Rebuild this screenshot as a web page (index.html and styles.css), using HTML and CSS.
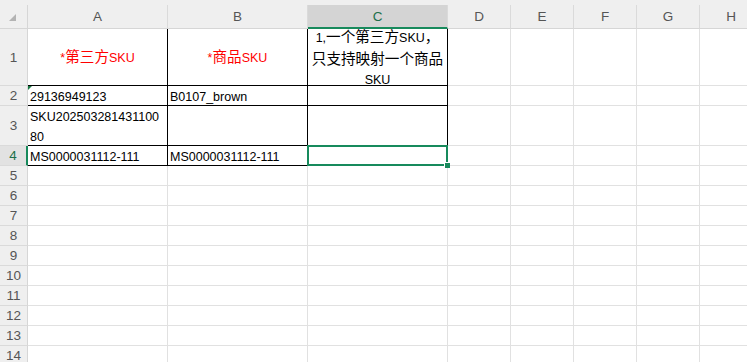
FILE: index.html
```html
<!DOCTYPE html>
<html lang="zh-CN">
<head>
  <meta charset="UTF-8">
  <title>映射表</title>
  <link rel="stylesheet" href="styles.css">
</head>
<body>

  <div class="frame">
    <div class="sheet">

      <!-- column headers -->
      <div class="corner"><span class="all"></span></div>
      <div class="ch">A</div>
      <div class="ch">B</div>
      <div class="ch on">C</div>
      <div class="ch">D</div>
      <div class="ch">E</div>
      <div class="ch">F</div>
      <div class="ch">G</div>
      <div class="ch">H</div>

      <!-- row 1 -->
      <div class="rh">1</div>
      <div class="c bd title"><p>*<span class="cjk">第三方</span>SKU</p></div>
      <div class="c bd title"><p>*<span class="cjk">商品</span>SKU</p></div>
      <div class="c bd note"><p>1,<span class="cjk">一个第三方</span>SKU<span class="cjk">，</span><span class="cjk">只支持映射一个商品</span>SKU</p></div>
      <div class="c"></div><div class="c"></div><div class="c"></div><div class="c"></div><div class="c"></div>

      <!-- row 2 -->
      <div class="rh">2</div>
      <div class="c bd val warn"><span>29136949123</span></div>
      <div class="c bd val"><span>B0107_brown</span></div>
      <div class="c bd"></div>
      <div class="c"></div><div class="c"></div><div class="c"></div><div class="c"></div><div class="c"></div>

      <!-- row 3 -->
      <div class="rh">3</div>
      <div class="c bd val"><span class="wrap">SKU20250328143110080</span></div>
      <div class="c bd"></div>
      <div class="c bd"></div>
      <div class="c"></div><div class="c"></div><div class="c"></div><div class="c"></div><div class="c"></div>

      <!-- row 4 -->
      <div class="rh on">4</div>
      <div class="c bd val"><span>MS0000031112-111</span></div>
      <div class="c bd val"><span>MS0000031112-111</span></div>
      <div class="c bd sel"></div>
      <div class="c"></div><div class="c"></div><div class="c"></div><div class="c"></div><div class="c"></div>

      <div class="rh">5</div>
      <div class="c"></div><div class="c"></div><div class="c"></div><div class="c"></div><div class="c"></div><div class="c"></div><div class="c"></div><div class="c"></div>
      <div class="rh">6</div>
      <div class="c"></div><div class="c"></div><div class="c"></div><div class="c"></div><div class="c"></div><div class="c"></div><div class="c"></div><div class="c"></div>
      <div class="rh">7</div>
      <div class="c"></div><div class="c"></div><div class="c"></div><div class="c"></div><div class="c"></div><div class="c"></div><div class="c"></div><div class="c"></div>
      <div class="rh">8</div>
      <div class="c"></div><div class="c"></div><div class="c"></div><div class="c"></div><div class="c"></div><div class="c"></div><div class="c"></div><div class="c"></div>
      <div class="rh">9</div>
      <div class="c"></div><div class="c"></div><div class="c"></div><div class="c"></div><div class="c"></div><div class="c"></div><div class="c"></div><div class="c"></div>
      <div class="rh">10</div>
      <div class="c"></div><div class="c"></div><div class="c"></div><div class="c"></div><div class="c"></div><div class="c"></div><div class="c"></div><div class="c"></div>
      <div class="rh">11</div>
      <div class="c"></div><div class="c"></div><div class="c"></div><div class="c"></div><div class="c"></div><div class="c"></div><div class="c"></div><div class="c"></div>
      <div class="rh">12</div>
      <div class="c"></div><div class="c"></div><div class="c"></div><div class="c"></div><div class="c"></div><div class="c"></div><div class="c"></div><div class="c"></div>
      <div class="rh">13</div>
      <div class="c"></div><div class="c"></div><div class="c"></div><div class="c"></div><div class="c"></div><div class="c"></div><div class="c"></div><div class="c"></div>
      <div class="rh">14</div>
      <div class="c"></div><div class="c"></div><div class="c"></div><div class="c"></div><div class="c"></div><div class="c"></div><div class="c"></div><div class="c"></div>

    </div>
  </div>

</body>
</html>
```

FILE: styles.css
```css
body {
  margin: 0; padding: 0;
  background: #fff;
  overflow: hidden;
  font-family: "Liberation Sans", "Noto Sans CJK SC", sans-serif;
}
.frame {
  padding-top: 5px;
  background: #efefef;
  width: 747px;
  height: 362px;
  overflow: hidden;
}
.sheet {
  display: grid;
  grid-template-columns: 28px 140px 140px 140px repeat(5, 63px);
  grid-template-rows: 24px 57px 20px 40px 20px repeat(10, 20px);
  background: #fff;
}
.sheet > div { box-sizing: border-box; }

/* headers */
.corner {
  background: #efefef;
  border-right: 1px solid #d6d6d6;
  border-bottom: 1px solid #d6d6d6;
  padding: 9px 0 0 9px;
}
.all {
  display: block;
  width: 0; height: 0;
  border-left: 7px solid transparent;
  border-bottom: 7px solid #b3b3b3;
}
.ch {
  background: #efefef;
  border-right: 1px solid #dadada;
  border-bottom: 1px solid #d6d6d6;
  color: #555;
  font-size: 13.5px;
  display: flex; align-items: center; justify-content: center;
}
.ch.on {
  background: #d4d4d4;
  color: #1d6f4a;
  border-bottom: 2px solid #178a5c;
}
.rh {
  background: #efefef;
  border-right: 1px solid #d6d6d6;
  border-bottom: 1px solid #dadada;
  color: #555;
  font-size: 13.5px;
  display: flex; align-items: center; justify-content: center;
}
.rh.on {
  background: #e2e2e2;
  color: #1d6f4a;
  border-right: 2px solid #178a5c;
}

/* cells */
.c {
  position: relative;
  border-right: 1px solid #e1e1e1;
  border-bottom: 1px solid #e1e1e1;
  font-size: 12.5px;
  color: #000;
  padding: 0 4px 0 2px;
  min-width: 0;
}
.c.bd { border-color: #000; }
.c p { margin: 0; }
.cjk { font-family: "Noto Sans CJK SC", sans-serif; font-size: 14.6px; }

.title {
  color: #f00;
  display: flex; align-items: center; justify-content: center;
  padding: 0;
  line-height: 21px;
}
.note {
  text-align: center;
  line-height: 20px;
  padding: 2px 2px 0;
  display: flex; align-items: center; justify-content: center;
}
.note p { width: 100%; }
.val {
  display: flex; align-items: flex-end;
  line-height: 20px;
}
.val span { margin-bottom: -2px; }
.wrap { word-break: break-all; }

/* green error marker on A2 */
.warn::before {
  content: "";
  position: absolute; left: 0; top: 0;
  border-top: 4px solid #1a7a45;
  border-right: 4px solid transparent;
}

/* active cell */
.sel::after {
  content: "";
  position: absolute;
  inset: -1px;
  border: 2px solid #178a5c;
}
.sel::before {
  content: "";
  position: absolute;
  right: -3px; bottom: -3px;
  width: 5px; height: 5px;
  background: #178a5c;
  box-shadow: -1px -1px 0 #fff;
  z-index: 1;
}
```
